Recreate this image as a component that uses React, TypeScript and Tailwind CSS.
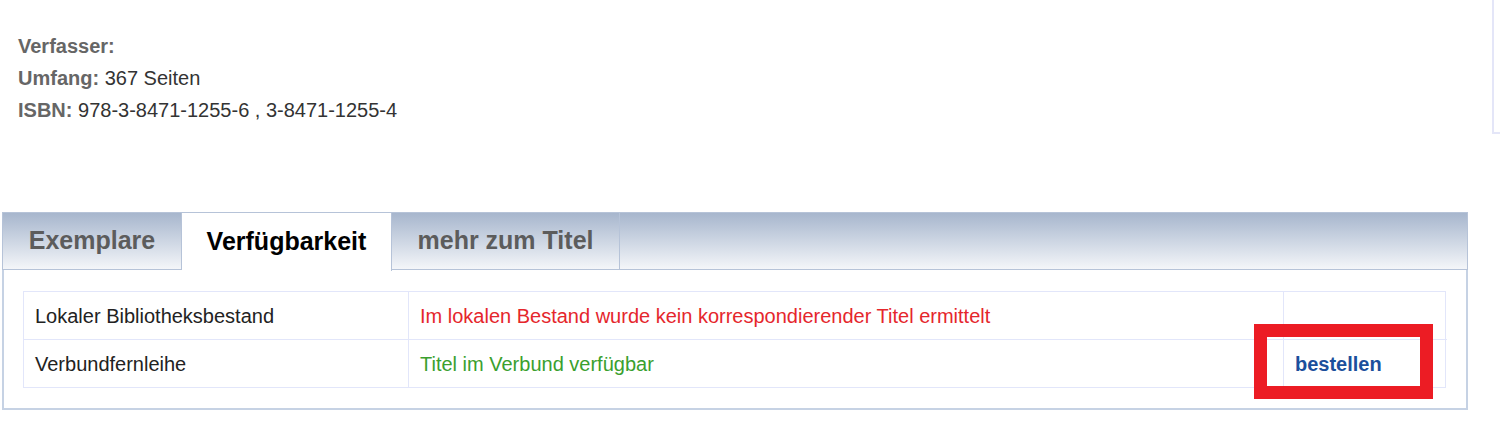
export default function App() {
  const tabs = [
    { label: "Exemplare", w: "w-[179px]", active: false },
    { label: "Verfügbarkeit", w: "w-[210px]", active: true },
    { label: "mehr zum Titel", w: "w-[228px]", active: false },
  ];

  return (
    <div className="w-[1500px] h-[429px] bg-white font-['Liberation_Sans',Arial,sans-serif] overflow-hidden">
      {/* Title details */}
      <div className="flex">
        <div className="flex-1 pl-[18px] pt-[30px] text-[20px] leading-[32px] text-[#333]">
          <div>
            <span className="font-bold text-[#666]">Verfasser:</span>
          </div>
          <div>
            <span className="font-bold text-[#666]">Umfang:</span> 367 Seiten
          </div>
          <div>
            <span className="font-bold text-[#666]">ISBN:</span> 978-3-8471-1255-6 , 3-8471-1255-4
          </div>
        </div>
        <div className="w-[8px] h-[134px] border-l-2 border-b-2 border-[#e4e6f8]" />
      </div>

      {/* Tabs */}
      <div className="pl-[2px] mt-[78px] w-[1468px]">
        <div className="flex h-[58px] border border-[#b6c3d8] bg-gradient-to-b from-[#a7b6cd] to-[#f4f6f9]">
          {tabs.map((t) => (
            <div
              key={t.label}
              className={`${t.w} flex items-center justify-center border-r border-[#b6c3d8] text-[25px] font-bold ${
                t.active ? "bg-white text-black h-[58px] -mb-px" : "text-[#5c5c5c]"
              }`}
            >
              {t.label}
            </div>
          ))}
        </div>

        <div className="border-2 border-t-0 border-[#c6d2e4] pl-[19px] pr-[20px] pt-[21px] pb-[20px]">
          <div className="grid grid-cols-[385px_875px_163px] border border-[#e2e6fa] text-[20px] text-[#222]">
            <div className="h-[48px] flex items-center pl-[11px] border-r border-b border-[#e2e6fa]">
              Lokaler Bibliotheksbestand
            </div>
            <div className="h-[48px] flex items-center pl-[11px] border-r border-b border-[#e2e6fa] text-[#e5262c]">
              Im lokalen Bestand wurde kein korrespondierender Titel ermittelt
            </div>
            <div className="h-[48px] border-b border-[#e2e6fa]" />
            <div className="h-[47px] flex items-center pl-[11px] border-r border-[#e2e6fa]">
              Verbundfernleihe
            </div>
            <div className="h-[47px] flex items-center pl-[11px] border-r border-[#e2e6fa] text-[#3aa02e]">
              Titel im Verbund verfügbar
            </div>
            <div className="relative h-[47px] flex items-center pl-[11px]">
              <a className="font-bold text-[#1b4f9c]">bestellen</a>
              <div className="absolute left-[-30px] top-[-16px] w-[179px] h-[75px] border-[13px] border-[#ec1c24]" />
            </div>
          </div>
        </div>
      </div>
    </div>
  );
}
